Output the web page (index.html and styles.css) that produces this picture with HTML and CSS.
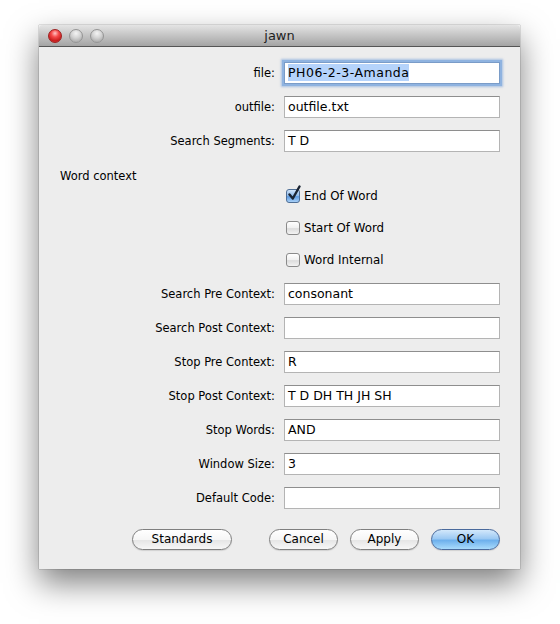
FILE: index.html
```html
<!DOCTYPE html>
<html>
<head>
<meta charset="utf-8">
<link rel="stylesheet" href="styles.css">
</head>
<body>
<div class="window">
  <div class="titlebar">
    <div class="lights">
      <span class="light red"></span>
      <span class="light gray"></span>
      <span class="light gray"></span>
    </div>
    <div class="title">jawn</div>
  </div>
  <div class="content">
    <div class="row">
      <div class="label">file:</div>
      <div class="field focus"><span class="sel">PH06-2-3-Amanda</span></div>
    </div>
    <div class="row">
      <div class="label">outfile:</div>
      <div class="field">outfile.txt</div>
    </div>
    <div class="row">
      <div class="label">Search Segments:</div>
      <div class="field">T D</div>
    </div>
    <div class="row section">
      <div class="section-label">Word context</div>
    </div>
    <div class="row check first">
      <div class="label"></div>
      <div class="checkline"><span class="box checked"><svg viewBox="0 0 16 18" width="16" height="18"><path d="M3.5 9.5 L6.8 13.5 L13.5 1.5" fill="none" stroke="#1a2433" stroke-width="2.4" stroke-linecap="round" stroke-linejoin="round"/></svg></span>End Of Word</div>
    </div>
    <div class="row check">
      <div class="label"></div>
      <div class="checkline"><span class="box"></span>Start Of Word</div>
    </div>
    <div class="row check">
      <div class="label"></div>
      <div class="checkline"><span class="box"></span>Word Internal</div>
    </div>
    <div class="row after-check">
      <div class="label">Search Pre Context:</div>
      <div class="field">consonant</div>
    </div>
    <div class="row">
      <div class="label">Search Post Context:</div>
      <div class="field"></div>
    </div>
    <div class="row">
      <div class="label">Stop Pre Context:</div>
      <div class="field">R</div>
    </div>
    <div class="row">
      <div class="label">Stop Post Context:</div>
      <div class="field">T D DH TH JH SH</div>
    </div>
    <div class="row">
      <div class="label">Stop Words:</div>
      <div class="field">AND</div>
    </div>
    <div class="row">
      <div class="label">Window Size:</div>
      <div class="field">3</div>
    </div>
    <div class="row">
      <div class="label">Default Code:</div>
      <div class="field"></div>
    </div>
    <div class="buttons">
      <div class="btn standards">Standards</div>
      <div class="btn cancel">Cancel</div>
      <div class="btn apply">Apply</div>
      <div class="btn ok">OK</div>
    </div>
  </div>
</div>
</body>
</html>
```
FILE: styles.css
```css
html, body {
  margin: 0;
  padding: 0;
  background: #ffffff;
}
body {
  width: 560px;
  height: 624px;
  overflow: hidden;
  font-family: "DejaVu Sans", "Liberation Sans", sans-serif;
  font-size: 11.5px;
  color: #000;
}
.window {
  margin: 25px 0 0 39px;
  width: 481px;
  height: 544px;
  background: #ededed;
  box-shadow: 0 14px 30px rgba(0,0,0,0.5), 0 0 1px rgba(0,0,0,0.6);
  display: flex;
  flex-direction: column;
}
.titlebar {
  height: 21px;
  background: linear-gradient(#e4e4e4, #c4c4c4 50%, #a4a4a4);
  border-bottom: 1px solid #555;
  border-radius: 4px 4px 0 0;
  display: flex;
  align-items: center;
  position: relative;
}
.lights {
  display: flex;
  gap: 7px;
  padding-left: 9px;
}
.light {
  width: 14px;
  height: 14px;
  border-radius: 50%;
  box-sizing: border-box;
}
.light.red {
  background: radial-gradient(circle at 50% 28%, #ffc4c4 0, #f54a4a 35%, #c81c1c 72%, #ea5e5e 100%);
  border: 1px solid #9c2020;
}
.light.gray {
  background: radial-gradient(circle at 50% 28%, #f4f4f4 0, #d2d2d2 45%, #b0b0b0 78%, #d6d6d6 100%);
  border: 1px solid #959595;
}
.title {
  position: absolute;
  left: 0;
  right: 0;
  top: 0;
  height: 21px;
  line-height: 21px;
  text-align: center;
  font-size: 13px;
  color: #1e1e1e;
  pointer-events: none;
}
.content {
  padding: 15px 20px 0 21px;
  display: flex;
  flex-direction: column;
  gap: 12px;
}
.row {
  display: flex;
  align-items: center;
  height: 22px;
  gap: 9px;
}
.label {
  width: 215px;
  text-align: right;
  white-space: nowrap;
}
.field {
  width: 216px;
  height: 22px;
  box-sizing: border-box;
  background: #fff;
  border: 1px solid #b4b4b4;
  border-top-color: #8e8e8e;
  padding: 0 3px;
  line-height: 20px;
  font-size: 12.5px;
  white-space: nowrap;
  overflow: hidden;
}
.field.focus {
  box-shadow: 0 0 0 2px #8fb3e0, 0 0 2px 3px rgba(110,155,215,0.55);
  border-color: #7a9cc8;
}
.sel {
  background: #b5d3fb;
  padding: 1px 0;
  letter-spacing: 0.5px;
}
.section-label {
  padding-top: 1px;
}
.check {
  height: 20px;
}
.check.first {
  margin-top: -12px;
}
.after-check {
  margin-top: 1px;
}
.checkline {
  display: flex;
  align-items: center;
  gap: 4px;
  font-size: 11.8px;
  margin-left: 2px;
}
.box {
  width: 14px;
  height: 14px;
  box-sizing: border-box;
  border: 1px solid #8a8a8a;
  border-radius: 3px;
  background: linear-gradient(#ffffff, #f0f0f0 50%, #dcdcdc 55%, #f3f3f3);
  position: relative;
  flex: none;
}
.box.checked {
  background: linear-gradient(#cfe3f9, #8db9ea 50%, #5d9ae0 55%, #a8d0f7);
  border-color: #4f6f96;
}
.box svg {
  position: absolute;
  left: -1px;
  top: -5px;
}
.buttons {
  display: flex;
  align-items: center;
  margin-top: 8px;
  padding-left: 72px;
  gap: 12px;
}
.btn {
  flex: none;
  height: 21px;
  box-sizing: border-box;
  border: 1px solid #7f7f7f;
  border-radius: 11px;
  background: linear-gradient(#ffffff, #f6f6f6 50%, #e6e6e6 55%, #f7f7f7);
  box-shadow: 0 1px 1px rgba(0,0,0,0.12);
  text-align: center;
  line-height: 19px;
  font-size: 12px;
}
.standards { width: 100px; }
.cancel { width: 69px; margin-left: 25px; }
.apply { width: 69px; }
.ok {
  width: 69px;
  border-color: #4a6a9c;
  background: linear-gradient(#d3e8fb, #9cc9f3 45%, #6eb0ec 55%, #a9dbfc);
}
```
